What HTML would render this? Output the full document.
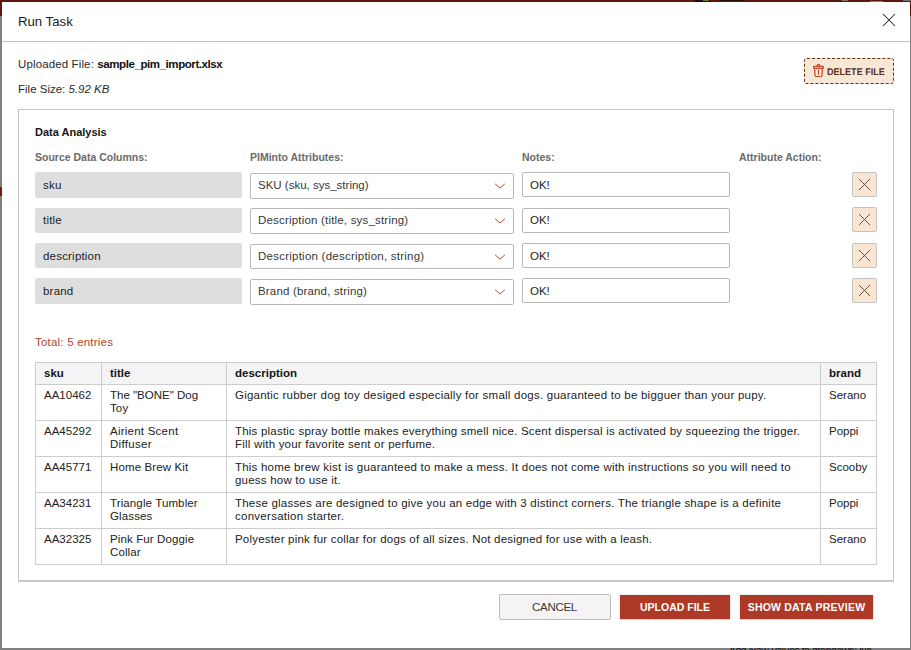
<!DOCTYPE html>
<html lang="en">
<head>
<meta charset="utf-8">
<title>Run Task</title>
<style>
*{box-sizing:border-box;margin:0;padding:0}
html,body{width:911px;height:650px;overflow:hidden}
body{font-family:"Liberation Sans",sans-serif;background:#808080;position:relative;color:#222;font-size:11.5px}
.bgtop{position:absolute;left:0;top:0;width:911px;height:16px;background:#5a190e}
.bgtext{position:absolute;left:729px;top:643.5px;font-size:10.4px;line-height:13px;color:#151515;white-space:nowrap;letter-spacing:-.42px}
.modal{position:absolute;left:2px;top:2px;width:908px;height:646px;background:#fff}
.abs{position:absolute;white-space:nowrap}
.px{position:absolute}
.hline{position:absolute;left:2px;top:41px;width:908px;height:1px;background:#c2c2c2}
.title{left:18px;top:13px;font-size:13.2px;line-height:17px;color:#1b1b1b}
.close{position:absolute;left:882px;top:13px;width:14px;height:14px}
.l1{left:18px;top:57px;line-height:14px;color:#2a2a2a}
.l1 b{color:#111;letter-spacing:-.42px}
.l2{left:18px;top:82px;line-height:14px;color:#2a2a2a}
.del{position:absolute;left:804px;top:58px;width:90px;height:26px;border:1px dashed #5b3216;background:#f9e7d5;border-radius:3px;color:#5b3216;font-size:9.7px;font-weight:700;white-space:nowrap}
.del svg{position:absolute;left:8px;top:4px}
.del span{position:absolute;left:22.4px;top:7.5px;line-height:12px;text-rendering:geometricPrecision;transform:scaleX(0.933);transform-origin:0 0}
.box{position:absolute;left:18px;top:109px;width:876px;height:472px;border:1px solid #c4c4c4;box-shadow:0 1px 0 rgba(0,0,0,.2)}
.h2{left:35px;top:125px;font-size:11px;font-weight:700;color:#151515;line-height:14px}
.lab{top:151px;font-size:10.5px;font-weight:700;color:#6a6a6a;line-height:13px}
.src{position:absolute;left:35px;width:207px;height:26px;background:#dedede;border-radius:2px;line-height:27px;padding-left:8px;color:#222;font-size:11.5px;letter-spacing:.2px}
.sel{position:absolute;left:250px;width:264px;border:1px solid #b8b8b8;border-radius:2px;padding-left:7px;color:#383838;background:#fff;font-size:11.5px;line-height:22px;white-space:nowrap}
.chev{position:absolute;right:7px;top:9px}
.note{position:absolute;left:522px;width:208px;height:25px;border:1px solid #b8b8b8;border-radius:2px;line-height:23px;padding-left:7px;color:#222;background:#fff;font-size:11.5px}
.xb{position:absolute;left:852px;width:25px;height:25px;border:1px solid #c4c3c2;border-radius:2px;background:#f9e6d2}
.xb svg{position:absolute;left:5px;top:5px}
.total{left:35px;top:335px;line-height:14px;color:#b2452f;letter-spacing:.21px}
table{position:absolute;left:35px;top:362px;width:841px;border-collapse:collapse;table-layout:fixed;line-height:13px;color:#222;font-size:11.5px}
th,td{border:1px solid #cdcdcd;text-align:left;vertical-align:top;padding:4px 0 0 8px;white-space:nowrap;overflow:hidden}
th{background:#f4f4f6;font-weight:700;color:#151515;padding-top:4px}
tr.h{height:22px}
tr{height:36px}
.btn{position:absolute;top:595px;height:24px;line-height:24px;text-align:center;white-space:nowrap;font-size:10.5px}
.cancel{left:499px;top:594px;width:112px;height:26px;border:1px solid #bcbcbc;background:#f5f3f4;color:#3a3a3a;line-height:25px;font-size:11.5px;border-radius:2px;letter-spacing:-.3px;padding-right:1px}
.red{background:#ad3926;color:#fff;font-weight:700;box-shadow:0 0 1px rgba(90,110,130,.55),0 1px 1px rgba(0,0,0,.12)}
td:nth-child(3){letter-spacing:.213px}.d1{letter-spacing:.236px}.d4b{letter-spacing:.27px}.d5{letter-spacing:.197px}
td:nth-child(2){letter-spacing:.12px}.t0{letter-spacing:0}.t1{letter-spacing:.24px}.t2{letter-spacing:.3px}
.s0{letter-spacing:0}.s1{letter-spacing:.19px}.s2{letter-spacing:.24px}.s3{letter-spacing:.17px}
</style>
</head>
<body>
<div class="bgtop"></div>
<div class="px" style="left:695px;top:0;width:15px;height:2px;background:#1c120a"></div>
<div class="px" style="left:703px;top:0;width:6px;height:1px;background:#6f7a2a"></div>
<div class="px" style="left:719px;top:0;width:25px;height:1px;background:#2c0d08"></div>
<div class="px" style="left:842px;top:0;width:6px;height:1px;background:#8a6f6a"></div>
<div class="px" style="left:870px;top:1px;width:13px;height:1px;background:#8f7d7a"></div>
<div class="px" style="left:903px;top:0;width:8px;height:1px;background:#7d6f6c"></div>
<div class="px" style="left:0;top:187px;width:2px;height:9px;background:#6e1f14"></div>
<div class="bgtext">Add New Values to dropdown: No</div>
<div class="modal"></div>
<div class="hline"></div>
<div class="abs title">Run Task</div>
<svg class="close" viewBox="0 0 14 14"><path d="M1 1 L13 13 M13 1 L1 13" stroke="#222" stroke-width="1.05" fill="none"/></svg>
<div class="abs l1"><span style="letter-spacing:.13px">Uploaded File: </span><b>sample_pim_import.xlsx</b></div>
<div class="abs l2">File Size: <i>5.92 KB</i></div>
<div class="del">
  <svg width="11" height="14" viewBox="0 0 11 14"><path d="M4.3 3.4 V2.6 Q4.3 1.4 5.5 1.4 Q6.7 1.4 6.7 2.6 V3.4 M1.4 3.4 H9.6 Q10.5 3.4 10.5 4.4 Q10.5 5.4 9.6 5.4 H1.4 Q0.5 5.4 0.5 4.4 Q0.5 3.4 1.4 3.4 Z M1.6 5.6 L2 12.3 Q2.1 13.5 3.3 13.5 H7.7 Q8.9 13.5 9 12.3 L9.4 5.6" stroke="#c2472b" stroke-width="1.25" fill="none"/><path d="M5.5 7 V11.2" stroke="#c2472b" stroke-width="1.1" fill="none" stroke-linecap="round"/></svg>
  <span>DELETE FILE</span>
</div>
<div class="box"></div>
<div class="abs h2">Data Analysis</div>
<div class="abs lab" style="left:35px">Source Data Columns:</div>
<div class="abs lab" style="left:250px">PIMinto Attributes:</div>
<div class="abs lab" style="left:522px">Notes:</div>
<div class="abs lab" style="left:739px">Attribute Action:</div>
  <div class="src" style="top:172px;height:26px;line-height:27px">sku</div>
  <div class="sel" style="top:173px;height:26px"><span class="s0">SKU (sku, sys_string)</span><svg class="chev" width="12" height="7" viewBox="0 0 12 7"><path d="M1.4 1.1 L6 5 L10.6 1.1" stroke="#c04a2a" stroke-width="1" fill="none" stroke-linecap="round" stroke-linejoin="round"/></svg></div>
  <div class="note" style="top:172px;line-height:25px">OK!</div>
  <div class="xb" style="top:172px"><svg width="13" height="13" viewBox="0 0 13 13"><path d="M1 1 L12 12 M12 1 L1 12" stroke="#5f4030" stroke-width="0.9" fill="none"/></svg></div>
  <div class="src" style="top:208px;height:25px;line-height:25px">title</div>
  <div class="sel" style="top:208px;height:26px"><span class="s1">Description (title, sys_string)</span><svg class="chev" width="12" height="7" viewBox="0 0 12 7"><path d="M1.4 1.1 L6 5 L10.6 1.1" stroke="#c04a2a" stroke-width="1" fill="none" stroke-linecap="round" stroke-linejoin="round"/></svg></div>
  <div class="note" style="top:208px;line-height:23px">OK!</div>
  <div class="xb" style="top:207px"><svg width="13" height="13" viewBox="0 0 13 13"><path d="M1 1 L12 12 M12 1 L1 12" stroke="#5f4030" stroke-width="0.9" fill="none"/></svg></div>
  <div class="src" style="top:243px;height:25px;line-height:27px">description</div>
  <div class="sel" style="top:244px;height:25px"><span class="s2">Description (description, string)</span><svg class="chev" width="12" height="7" viewBox="0 0 12 7"><path d="M1.4 1.1 L6 5 L10.6 1.1" stroke="#c04a2a" stroke-width="1" fill="none" stroke-linecap="round" stroke-linejoin="round"/></svg></div>
  <div class="note" style="top:243px;line-height:25px">OK!</div>
  <div class="xb" style="top:243px"><svg width="13" height="13" viewBox="0 0 13 13"><path d="M1 1 L12 12 M12 1 L1 12" stroke="#5f4030" stroke-width="0.9" fill="none"/></svg></div>
  <div class="src" style="top:278px;height:26px;line-height:27px">brand</div>
  <div class="sel" style="top:279px;height:26px"><span class="s3">Brand (brand, string)</span><svg class="chev" width="12" height="7" viewBox="0 0 12 7"><path d="M1.4 1.1 L6 5 L10.6 1.1" stroke="#c04a2a" stroke-width="1" fill="none" stroke-linecap="round" stroke-linejoin="round"/></svg></div>
  <div class="note" style="top:278px;line-height:24px">OK!</div>
  <div class="xb" style="top:278px"><svg width="13" height="13" viewBox="0 0 13 13"><path d="M1 1 L12 12 M12 1 L1 12" stroke="#5f4030" stroke-width="0.9" fill="none"/></svg></div>

<div class="abs total">Total: 5 entries</div>
<table>
  <colgroup><col style="width:66px"><col style="width:125px"><col style="width:594px"><col style="width:56px"></colgroup>
  <thead><tr class="h"><th>sku</th><th>title</th><th>description</th><th>brand</th></tr></thead>
  <tbody>
      <tr><td>AA10462</td><td><span class="t0">The "BONE" Dog</span><br>Toy</td><td><span class="d1">Gigantic rubber dog toy desiged especially for small dogs. guaranteed to be bigguer than your pupy.</span></td><td>Serano</td></tr>
      <tr><td>AA45292</td><td><span class="t1">Airient Scent</span><br><span class="t2">Diffuser</span></td><td><span class="d2">This plastic spray bottle makes everything smell nice. Scent dispersal is activated by squeezing the trigger.</span><br><span class="d2b">Fill with your favorite sent or perfume.</span></td><td>Poppi</td></tr>
      <tr><td>AA45771</td><td>Home Brew Kit</td><td><span class="d3">This home brew kist is guaranteed to make a mess. It does not come with instructions so you will need to</span><br><span class="d3b">guess how to use it.</span></td><td>Scooby</td></tr>
      <tr><td>AA34231</td><td>Triangle Tumbler<br>Glasses</td><td><span class="d4">These glasses are designed to give you an edge with 3 distinct corners. The triangle shape is a definite</span><br><span class="d4b">conversation starter.</span></td><td>Poppi</td></tr>
      <tr><td>AA32325</td><td>Pink Fur Doggie<br>Collar</td><td><span class="d5">Polyester pink fur collar for dogs of all sizes. Not designed for use with a leash.</span></td><td>Serano</td></tr>
  </tbody>
</table>
<div class="btn cancel">CANCEL</div>
<div class="btn red" style="left:620px;width:110px">UPLOAD FILE</div>
<div class="btn red" style="left:740px;width:133px;letter-spacing:.2px">SHOW DATA PREVIEW</div>
</body>
</html>
